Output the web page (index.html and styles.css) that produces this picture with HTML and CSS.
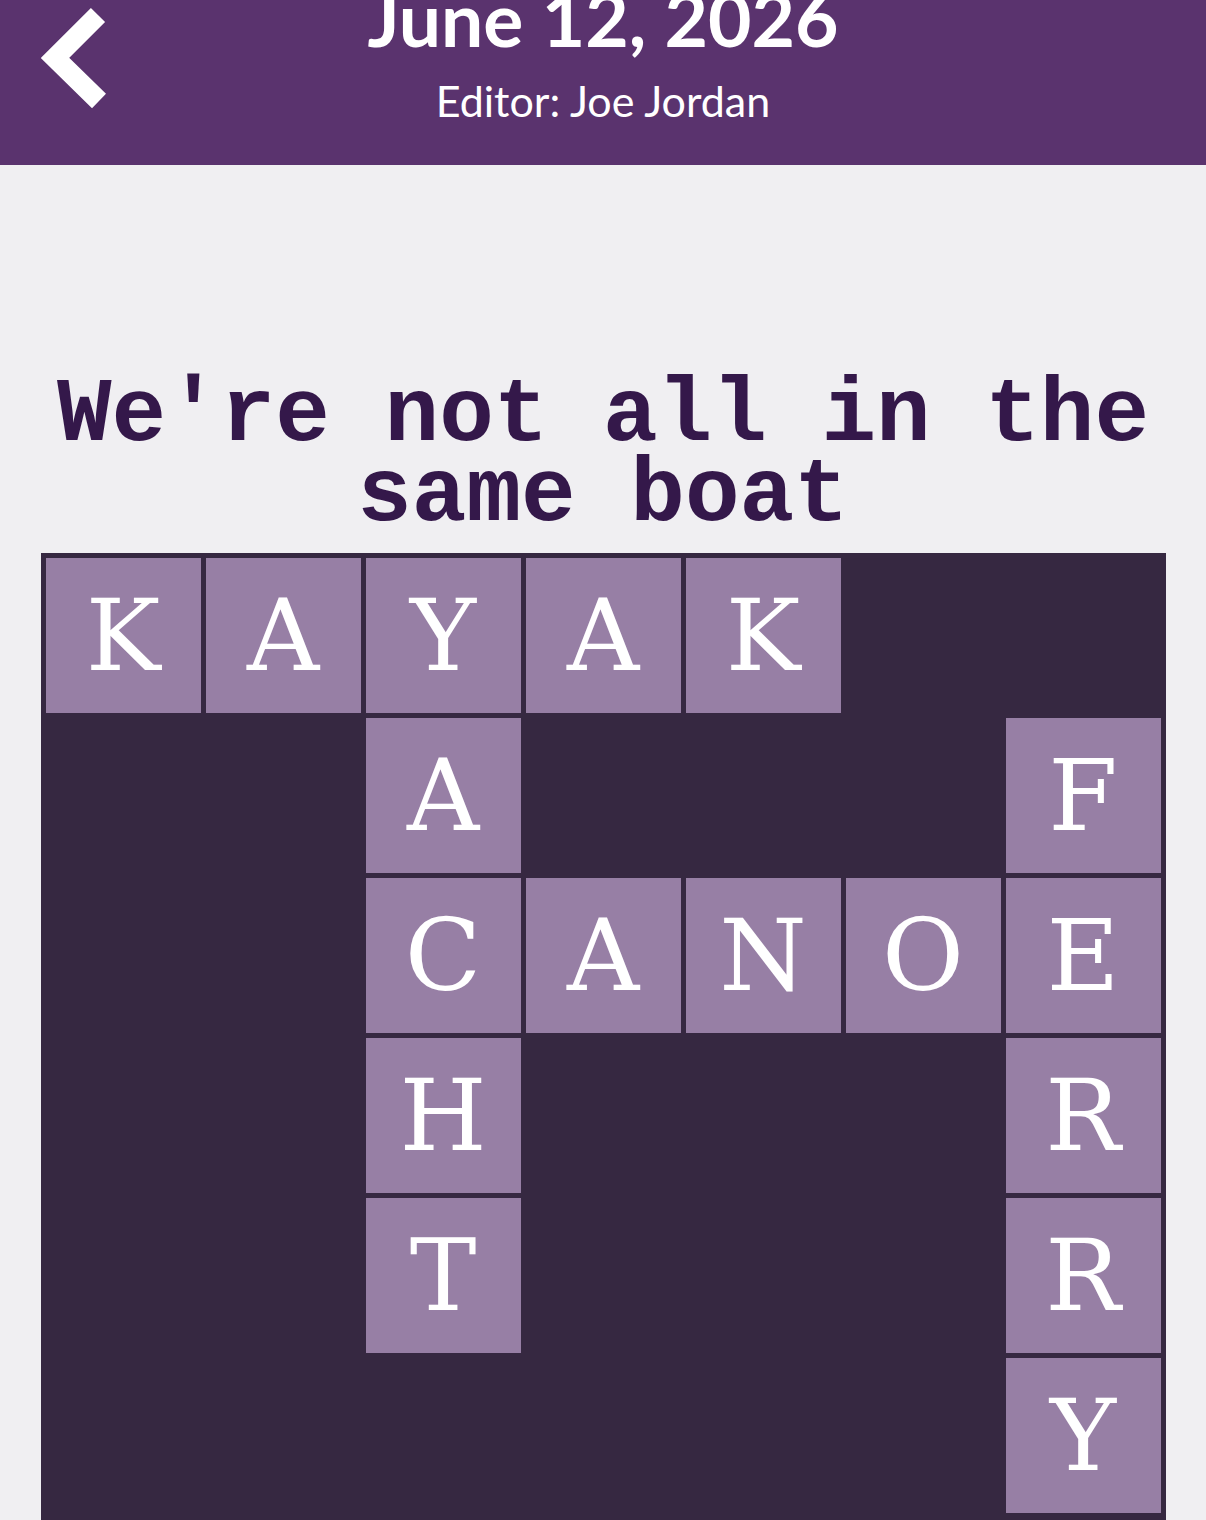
FILE: index.html
```html
<!DOCTYPE html>
<html lang="en">
<head>
    <meta charset="UTF-8">
    <meta name="viewport" content="width=device-width, initial-scale=1.0">
    <title>June 12, 2026</title>
    <link rel="stylesheet" href="styles.css">
</head>
<body>
    <header class="topbar">
        <a class="back" href="#" aria-label="Back">
            <svg width="80" height="115" viewBox="0 0 80 115">
                <polyline points="68,15 25,58 69,101" fill="none" stroke="#fff" stroke-width="20" stroke-linejoin="miter"/>
            </svg>
        </a>
        <div class="title-block">
            <div class="title">June 12, 2026</div>
            <div class="editor">Editor: Joe Jordan</div>
        </div>
        <div></div>
    </header>

    <h1 class="clue">We're not all in the same boat</h1>

    <div class="board">
        <div class="tile">K</div><div class="tile">A</div><div class="tile">Y</div><div class="tile">A</div><div class="tile">K</div><div></div><div></div>
        <div></div><div></div><div class="tile">A</div><div></div><div></div><div></div><div class="tile">F</div>
        <div></div><div></div><div class="tile">C</div><div class="tile">A</div><div class="tile">N</div><div class="tile">O</div><div class="tile">E</div>
        <div></div><div></div><div class="tile">H</div><div></div><div></div><div></div><div class="tile">R</div>
        <div></div><div></div><div class="tile">T</div><div></div><div></div><div></div><div class="tile">R</div>
        <div></div><div></div><div></div><div></div><div></div><div></div><div class="tile">Y</div>
        <div></div><div></div><div></div><div></div><div></div><div></div><div></div>
    </div>
</body>
</html>
```

FILE: styles.css
```css
body {
    margin: 0;
    background-color: #f0eff2;
    font-family: Lato, "Open Sans", sans-serif;
}

.topbar {
    height: 165px;
    background-color: #5a336e;
    color: #fff;
    display: grid;
    grid-template-columns: 1fr auto 1fr;
    align-items: start;
    overflow: hidden;
}

.back {
    display: block;
    padding-left: 30px;
    line-height: 0;
}

.title-block {
    text-align: center;
}

.title {
    font-size: 75px;
    font-weight: 700;
    line-height: 1;
    margin-top: -19px;
}

.editor {
    font-size: 43px;
    line-height: 1;
    margin-top: 23px;
}

.clue {
    margin: 211px 0 17px;
    font-family: "Liberation Mono", monospace;
    font-size: 91px;
    line-height: 80px;
    font-weight: 700;
    text-align: center;
    color: #34184a;
}

.board {
    width: 1125px;
    box-sizing: border-box;
    margin: 0 auto;
    padding: 5px;
    background-color: #362841;
    display: grid;
    grid-template-columns: repeat(7, 155px);
    grid-auto-rows: 155px;
    gap: 5px;
}

.tile {
    background-color: #977fa5;
    color: #fff;
    display: flex;
    justify-content: center;
    align-items: center;
    font-family: "DejaVu Serif", serif;
    font-size: 100px;
}
```
